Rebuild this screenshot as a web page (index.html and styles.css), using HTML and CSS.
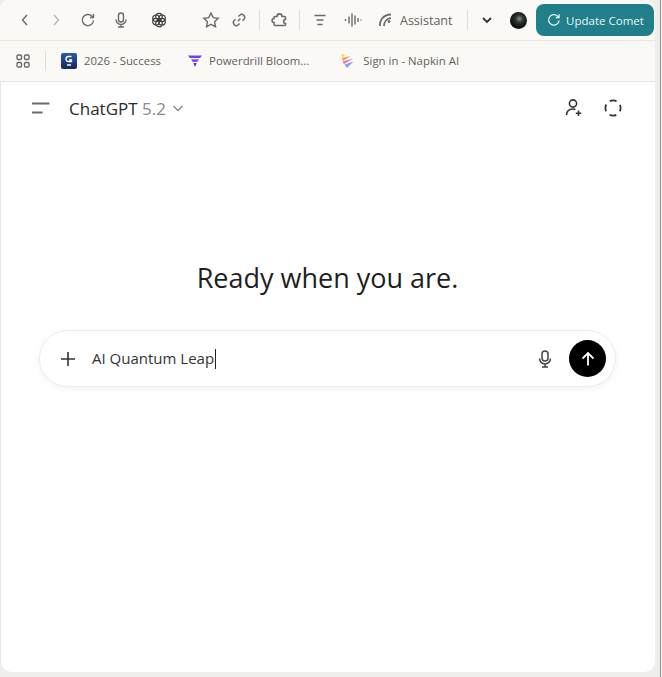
FILE: index.html
```html
<!DOCTYPE html>
<html lang="en">
<head>
    <meta charset="UTF-8">
    <meta name="viewport" content="width=device-width, initial-scale=1.0">
    <title>ChatGPT</title>
    <link rel="stylesheet" href="styles.css">
</head>
<body>
    <div class="window">
        <div class="toolbar">
            <svg class="icon back" width="16" height="16" viewBox="0 0 16 16"><path d="M10 3 5.500 8l4.500 5" /></svg>
            <svg class="icon forward faint" width="16" height="16" viewBox="0 0 16 16"><path d="m6 3 4.500 5L6 13" /></svg>
            <svg class="icon reload" width="16" height="16" viewBox="0 0 16 16"><path d="M13.500 8.500A5.600 5.600 0 1 1 11.800 4L13.500 5.500M13.500 2v3.500H10" /></svg>
            <svg class="icon mic" width="16" height="18" viewBox="0 0 16 18"><rect x="5.500" y="2" width="5" height="9" rx="2.500" /><path d="M3 8.500a5 5 0 0 0 10 0M8 13.500V16M5 16h6" /></svg>
            <svg class="gpt" width="16" height="16" viewBox="0 0 16 16"><circle cx="8" cy="4.600" r="3.300" /><circle cx="11" cy="6.300" r="3.300" /><circle cx="11" cy="9.700" r="3.300" /><circle cx="8" cy="11.400" r="3.300" /><circle cx="5" cy="9.700" r="3.300" /><circle cx="5" cy="6.300" r="3.300" /></svg>
            <svg class="icon star" width="18" height="18" viewBox="0 0 18 18"><path d="m9 2 2.200 4.600 5 .7-3.600 3.500.9 5L9 13.400l-4.500 2.400.9-5L1.800 7.300l5-.7z" /></svg>
            <svg class="icon link" width="16" height="16" viewBox="0 0 16 16"><path d="m6.800 9.200 2.600-2.600M7.400 4.600l1.300-1.300a2.900 2.900 0 0 1 4.100 4.100l-1.300 1.300M8.600 11.400l-1.300 1.300a2.900 2.900 0 0 1-4.100-4.100l1.300-1.300" /></svg>
            <span class="sep sep-a"></span>
            <svg class="icon ext" width="18" height="16" viewBox="0 0 18 16"><path d="M4 4.500h2c0-3.500 5-3.500 5 0h2.500c.6 0 1 .4 1 1v2c-2.500 0-2.500 4 0 4v1c0 .6-.4 1-1 1H4c-.6 0-1-.4-1-1v-2c-2.500 0-2.500-4 0-4v-1c0-.6.4-1 1-1z" /></svg>
            <span class="sep sep-b"></span>
            <svg class="icon list" width="14" height="14" viewBox="0 0 14 14"><path d="M1.500 2.500h11M3.500 7h7M4.500 11.500h5" /></svg>
            <svg class="icon wave" width="18" height="18" viewBox="0 0 18 18"><path d="M1.500 8v2M5 5.500v7M8 2.500v13M11 4.500v9M14 7v4M16.800 8.500v1" /></svg>
            <svg class="icon assist" width="16" height="16" viewBox="0 0 16 16"><path class="thick" d="M2 14C1.500 7.500 6 2.500 13 2.500M6 14c0-4 2.500-7.500 7-7.800" /><circle class="dot" cx="11" cy="9.500" r="1.400" /></svg>
            <span class="assist-label">Assistant</span>
            <span class="sep sep-c"></span>
            <svg class="icon chev" width="12" height="12" viewBox="0 0 12 12"><path class="thick" d="m2 4 4 4 4-4" /></svg>
            <span class="avatar"></span>
            <div class="update">
                <svg class="icon" width="14" height="14" viewBox="0 0 16 16"><path d="M13.800 8.500A6 6 0 1 1 11.900 3.500L13.800 5.200M13.800 1.500v3.800H10" /></svg>
                Update Comet
            </div>
        </div>

        <div class="bookmarks">
            <svg class="icon apps" width="14" height="14" viewBox="0 0 14 14"><rect x="1" y="1" width="4.500" height="4.500" rx="1.200" /><rect x="8.500" y="1" width="4.500" height="4.500" rx="1.200" /><rect x="1" y="8.500" width="4.500" height="4.500" rx="1.200" /><rect x="8.500" y="8.500" width="4.500" height="4.500" rx="1.200" /></svg>
            <span class="sep sep-d"></span>
            <span class="bm bm-first">
                <svg width="16" height="16" viewBox="0 0 16 16"><defs><linearGradient id="gTile" x1="0" y1="0" x2="0" y2="1"><stop offset="0" stop-color="#2c5aa8" /><stop offset="1" stop-color="#14285e" /></linearGradient></defs><rect width="16" height="16" rx="2" fill="url(#gTile)" /><path d="M10.500 3.500H7.500a2.500 2.500 0 0 0 0 5h3V6.800H8M6 12h4" fill="none" stroke="#fff" stroke-width="1.300" /></svg>
                <span class="bm-label">2026 - Success</span>
            </span>
            <span class="bm bm-second">
                <svg width="16" height="16" viewBox="0 0 16 16"><path d="M1 2.500h14L13 5H3z" fill="#6d3df0" /><path d="M4 6.200h8L10.200 9H5.800z" fill="#7c4df5" /><path d="M6.300 10h3.400L8 14z" fill="#5a2de0" /></svg>
                <span class="bm-label">Powerdrill Bloom...</span>
            </span>
            <span class="bm bm-third">
                <svg width="16" height="16" viewBox="0 0 16 16"><path d="M1.500 0.500 5 2.500 2 4.500z" fill="#f7d13d" /><path d="M2 5 10.500 3 3 8z" fill="#f79a3d" /><path d="M2.500 8.500 13.500 5.500 4 11z" fill="#e76ee0" /><path d="M4.500 11.500 13.500 8.500 7 15z" fill="#7fa6f5" /></svg>
                <span class="bm-label">Sign in - Napkin AI</span>
            </span>
        </div>

        <div class="chat">
            <div class="chat-head">
                <svg class="icon menu" width="20" height="14" viewBox="0 0 20 14"><path d="M1 2.500h17.500M1 11.500h10.500" /></svg>
                <span class="model">ChatGPT <span class="version">5.2</span></span>
                <svg class="model-chev" width="12" height="12" viewBox="0 0 12 12"><path d="m1.500 4 4.500 4.500L10.500 4" /></svg>
                <svg class="icon add-user" width="18" height="20" viewBox="0 0 18 20"><circle cx="8" cy="5.500" r="3.600" /><path d="M1.500 17c.2-3.800 2.700-6 6.500-6 1 0 1.800.1 2.500.4M13.500 12.500v5.500M10.800 15.200h5.500" /></svg>
                <svg class="icon temp" width="20" height="20" viewBox="0 0 20 20"><circle cx="10" cy="10" r="7.600" stroke-dasharray="7 4.940" stroke-dashoffset="3.500" /></svg>
            </div>

            <h1 class="ready">Ready when you are.</h1>

            <div class="composer">
                <svg class="icon plus" width="16" height="16" viewBox="0 0 16 16"><path d="M8 1v14M1 8h14" /></svg>
                <span class="prompt">AI Quantum Leap</span><span class="caret"></span>
                <svg class="icon composer-mic" width="16" height="20" viewBox="0 0 16 20"><rect x="5" y="2" width="6" height="10" rx="3" /><path d="M2.500 9.500a5.500 5.500 0 0 0 11 0M8 15v3M5 18h6" /></svg>
                <div class="send">
                    <svg width="16" height="16" viewBox="0 0 16 16"><path d="M8 14.500V2M2.500 7.500 8 2l5.500 5.500" /></svg>
                </div>
            </div>
        </div>
    </div>
</body>
</html>
```

FILE: styles.css
```css
body {
    margin: 0;
    width: 662px;
    height: 677px;
    overflow: hidden;
    background: linear-gradient(to right, #efeeea 660px, #8f8f8b 660px, #8f8f8b 661px, #f6f6f4 661px);
    font-family: "Open Sans", "Noto Sans", sans-serif;
}
.window {
    width: 655px;
    height: 672px;
    background: white;
    border-radius: 8px 10px 10px 10px;
    box-shadow: inset 1px 0 0 #e8e6e1;
    overflow: hidden;
    display: flex;
    flex-direction: column;
}
.icon {
    fill: none;
    stroke: #6a6a68;
    stroke-width: 1.4;
    flex-shrink: 0;
}
.icon .thick { stroke-width: 1.800; }
.icon .dot { fill: #6a6a68; stroke: none; }
.faint { stroke: #b5b5b2; }

.toolbar {
    height: 40px;
    background-color: #fbf9f5;
    border-bottom: 1px solid #e9e7e2;
    display: flex;
    align-items: center;
    padding-left: 17px;
    font-size: 12.500px;
    color: #5f5f5d;
}
.sep {
    width: 1px;
    height: 20px;
    background-color: #dfddd8;
    flex-shrink: 0;
}
.forward { margin-left: 15px; }
.reload { margin-left: 16px; }
.mic { margin-left: 17px; }
.gpt {
    margin-left: 22px;
    fill: none;
    stroke: #3c3c3c;
    stroke-width: 1.200;
    flex-shrink: 0;
}
.star { margin-left: 35px; }
.link { margin-left: 11px; }
.sep-a { margin-left: 12px; }
.ext { margin-left: 11px; stroke-width: 1.600; }
.sep-b { margin-left: 10px; }
.list { margin-left: 13px; }
.wave { margin-left: 17px; }
.assist { margin-left: 16px; }
.assist-label { margin-left: 6px; font-weight: 500; }
.sep-c { margin-left: 15px; }
.chev { margin-left: 13px; stroke: #333; }
.avatar {
    width: 17px;
    height: 17px;
    margin-left: 17px;
    border-radius: 50%;
    background: radial-gradient(circle at 55% 40%, #7f8f86 0, #2a302c 30%, #0c0c0c 70%);
    flex-shrink: 0;
}
.update {
    width: 118px;
    height: 32px;
    margin-left: 9px;
    background-color: #207f8a;
    border-radius: 8px;
    color: #eaf6f6;
    display: flex;
    align-items: center;
    justify-content: center;
    gap: 5px;
    font-size: 11.500px;
    font-weight: 500;
    white-space: nowrap;
    flex-shrink: 0;
}
.update .icon { stroke: #eaf6f6; }

.bookmarks {
    height: 40px;
    background-color: #fbf9f5;
    border-bottom: 1px solid #e9e7e2;
    display: flex;
    align-items: center;
    padding-left: 16px;
    font-size: 11.400px;
    color: #5f5f5d;
}
.sep-d { margin-left: 15px; }
.bm {
    display: flex;
    align-items: center;
    gap: 7px;
    white-space: nowrap;
}
.bm-label { padding-bottom: 2px; }
.bm-first { margin-left: 15px; }
.bm-second { margin-left: 26px; gap: 6px; }
.bm-third { margin-left: 31px; }

.chat {
    flex: 1;
    display: flex;
    flex-direction: column;
    align-items: center;
}
.chat-head {
    width: 100%;
    box-sizing: border-box;
    height: 54px;
    padding: 0 32px 2px 31px;
    display: flex;
    align-items: center;
    flex-shrink: 0;
}
.menu { stroke-width: 2; }
.model {
    margin-left: 18px;
    font-size: 17px;
    color: #2b2b2b;
    white-space: nowrap;
}
.version { color: #8a8a8a; }
.model-chev {
    margin-left: 6px;
    fill: none;
    stroke: #8a8a8a;
    stroke-width: 1.4;
}
.add-user {
    margin-left: auto;
    stroke: #333;
    stroke-width: 1.600;
}
.temp {
    margin-left: 20px;
    stroke: #333;
    stroke-width: 1.800;
}
.ready {
    margin: 124px 0 0;
    font-size: 27px;
    font-weight: 400;
    line-height: 36px;
    color: #1f1f1f;
}
.composer {
    width: 577px;
    height: 57px;
    margin-top: 34px;
    box-sizing: border-box;
    padding: 0 9px 0 20px;
    border: 1px solid #ececec;
    border-radius: 29px;
    box-shadow: 0 2px 6px rgba(0, 0, 0, 0.05);
    display: flex;
    align-items: center;
}
.plus { stroke: #333; stroke-width: 1.600; }
.prompt {
    margin-left: 16px;
    padding-bottom: 2px;
    font-size: 15px;
    color: #333;
    white-space: nowrap;
}
.caret {
    width: 1px;
    height: 20px;
    margin-left: 1px;
    background-color: #222;
}
.composer-mic {
    margin-left: auto;
    stroke: #444;
    stroke-width: 1.500;
}
.send {
    width: 37px;
    height: 37px;
    margin-left: 16px;
    background-color: #000;
    border-radius: 50%;
    display: flex;
    align-items: center;
    justify-content: center;
    flex-shrink: 0;
}
.send svg {
    fill: none;
    stroke: white;
    stroke-width: 1.800;
}
```
